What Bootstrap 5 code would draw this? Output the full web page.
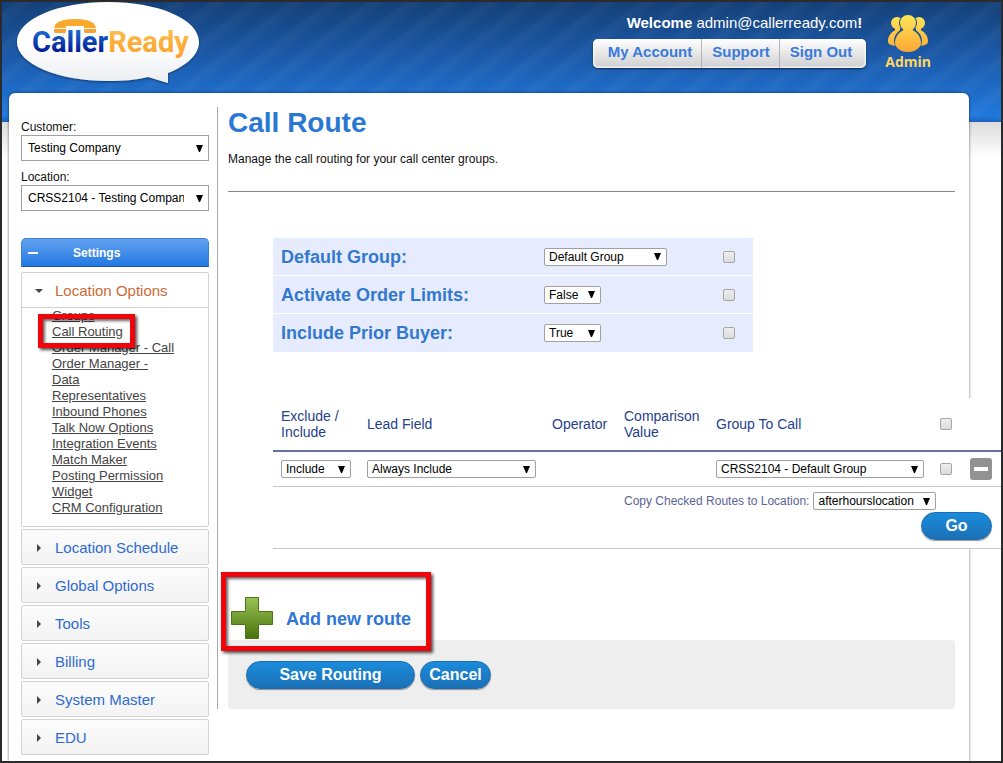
<!DOCTYPE html>
<html lang="en">
<head>
<meta charset="utf-8">
<meta name="viewport" content="width=device-width, initial-scale=1">
<title>CallerReady - Call Route</title>
<link rel="stylesheet" href="https://cdn.jsdelivr.net/npm/bootstrap@5.3.0/dist/css/bootstrap.min.css">
<style>
  body {
    font: 12px/16px "Liberation Sans", Arial, sans-serif;
    color: #111;
    min-height: 100vh;
    border: 2px solid #2b2b2d;
    background:
      repeating-linear-gradient(142deg, rgba(255,255,255,0) 0 9px, rgba(255,255,255,.03) 13px 18px, rgba(255,255,255,0) 24px) 0 0 / 100% 122px no-repeat,
      linear-gradient(#143f76, #1b59a8 45%, #2078dd 95%, #1a62b8) 0 0 / 100% 122px no-repeat,
      linear-gradient(#dcdcdc, #fff) 0 122px / 100% 36px no-repeat,
      #fff;
  }
  /* Header */
  .site-head { height: 91px; padding: 0 70px 0 14px; }
  .welcome { font-size: 15px; color: #fff; padding: 13px 4px 0 0; }
  .head-links {
    height: 29px; padding: 0 5px; margin-top: 8px; border-radius: 5px;
    background: linear-gradient(#fff, #e9e9ea 45%, #cfcfd1);
    box-shadow: 0 1px 2px rgba(0,0,0,.6), inset 0 0 2px 1px #fff;
  }
  .head-links a { font-size: 15px; font-weight: bold; line-height: 26px; padding: 0 9px 0 10px; color: #3a7adb; text-decoration: none; }
  .head-links a + a { border-left: 1px solid #b5b5b8; }
  .admin-link { color: #ffd562; font: bold 14px/16px "Open Sans", sans-serif; text-decoration: none; padding-top: 12px; margin-left: 19px; }

  /* Page sheet */
  .sheet {
    margin: 0 32px 0 7px; padding: 14px 14px 6px 12px; background: #fff;
    border-radius: 6px 6px 0 0; box-shadow: 0 0 3px rgba(0,0,0,.6);
    min-height: calc(100vh - 95px);
  }
  .side { width: 188px; margin-right: 8px; padding-top: 12px; }
  .main { min-width: 0; border-left: 1px solid #aaa; padding-left: 10px; }

  /* Form controls */
  .pick {
    appearance: none; height: 18px; padding: 0 16px 0 4px; color: #000; font-size: 12px; line-height: 16px;
    border: 1px solid #a0a0a0; border-radius: 2px;
    background: #fff url("data:image/svg+xml,%3Csvg xmlns='http://www.w3.org/2000/svg' width='7' height='7'%3E%3Cpath d='M0 0h7L4 7H3z'/%3E%3C/svg%3E") right 5px center no-repeat;
  }
  .pick-lg { height: 26px; border-radius: 0; padding: 0 24px 0 6px; width: 100%; }
  .tick {
    appearance: none; display: block; width: 12px; height: 12px; margin: 0;
    border: 1px solid #a6a6a6; border-radius: 2px; background: linear-gradient(#eee, #dcdcdc);
  }
  .tick:checked { background: #2a7bd8; }
  .w-default { width: 123px; } .w-bool { width: 57px; } .w-incl { width: 70px; }
  .w-field { width: 169px; } .w-group { width: 208px; }

  /* Side menu */
  .menu-title {
    height: 29px; margin: 27px 0 5px; border-radius: 5px 5px 0 0; color: #fff; font-weight: bold;
    border: 1px solid #3a80d8; border-bottom-color: #1b55a8; background: linear-gradient(#62a1ef, #2379e2); padding: 0 6px;
  }
  .menu-title::before { content: ""; width: 10px; height: 2px; background: #fff; margin-right: 35px; }
  .menu-item { border: 1px solid #d3d3d3; border-radius: 2px; margin-bottom: 2px; background: linear-gradient(#fcfcfc, #f3f3f3); }
  .menu-item.open { background: #fff; }
  .menu-head { width: 100%; height: 34px; border: 0; background: none; padding: 1px 0 0 12px; font-size: 15px; color: #2e6bd0; text-align: left; }
  .menu-head svg { width: 21px; height: 10px; display: block; }
  .open .menu-head { height: 35px; color: #cc6b35; border-bottom: 1px solid #d3d3d3; }
  .menu-list { padding: 0 32px 10px 30px; font-size: 13px; }
  .menu-list a { color: #444; text-decoration: underline; }

  /* Callout frames */
  .callout-host { position: relative; }
  .callout-frame {
    position: absolute; border: 5px solid #f0040c; pointer-events: none;
    box-shadow: 2px 2px 3px rgba(0,0,0,.7), inset 2px 2px 3px rgba(0,0,0,.6);
  }
  .frame-menu { inset: -10px auto auto -14px; width: 97px; height: 34px; }
  .frame-add { inset: -25px auto auto -7px; width: 210px; height: 79px; }

  /* Main content */
  h1 { font-size: 28px; line-height: 32px; font-weight: bold; color: #2a78d4; margin: 0 0 12px; }
  .rule { border: 0; border-top: 1px solid #888; opacity: 1; margin: 24px 0 46px; }
  table { border-collapse: separate; border-spacing: 0; table-layout: fixed; }
  th, td { padding: 0 8px; vertical-align: middle; }
  .options { width: 480px; margin: 0 0 46px 45px; }
  .options th, .options td { height: 38px; background: #e6ecfe; }
  .options th { font-size: 18px; color: #3278ce; }
  .options tr:not(:last-child) > * { border-bottom: 1px solid #fff; }
  .routes { width: calc(100% + 1px); margin: 0 -46px 48px 45px; background: #fff; position: relative; }
  .routes th { height: 54px; font-size: 14px; font-weight: normal; color: #263f8c; border-bottom: 2px solid #666da8; }
  .routes td { height: 35px; border-bottom: 1px solid #c6c6c6; }
  .routes .copy-cell { height: 62px; padding: 5px 9px 8px 8px; vertical-align: top; color: #5c6496; }
  .copy-stack { gap: 2px; }
  .remove-btn { display: block; border: 0; padding: 0; width: 22px; height: 22px; background: none; }
  .add-route { width: fit-content; height: 43px; padding: 0 0 0 3px; font-size: 18px; font-weight: bold; color: #2f76d8; text-decoration: none; gap: 13px; }
  .actions { height: 69px; background: #eee; border-radius: 4px; padding: 0 18px; gap: 5px; }
  .pill {
    height: 28px; min-width: 71px; border: 1px solid #1b6cae; border-radius: 14px; padding: 0 8px;
    font-size: 16px; line-height: 24px; font-weight: bold; color: #fff;
    background: linear-gradient(#1a8cdb, #1b70b6); box-shadow: 0 1px 1px rgba(0,0,0,.4);
  }
  .pill-wide { width: 169px; }
</style>
</head>
<body>
<header class="site-head d-flex align-items-start">
  <a href="#" aria-label="CallerReady home">
    <svg class="d-block" width="186" height="86" viewBox="0 0 186 86">
      <defs>
        <linearGradient id="lgBubble" x1="0" y1="0" x2="0" y2="1"><stop offset="0" stop-color="#fff"/><stop offset=".5" stop-color="#fff"/><stop offset="1" stop-color="#eceef2"/></linearGradient>
        <linearGradient id="lgBlue" gradientUnits="userSpaceOnUse" x1="0" y1="29" x2="0" y2="50"><stop offset="0" stop-color="#1769cf"/><stop offset="1" stop-color="#021c96"/></linearGradient>
        <linearGradient id="lgGold" gradientUnits="userSpaceOnUse" x1="0" y1="28" x2="0" y2="56"><stop offset="0" stop-color="#fdbd4d"/><stop offset="1" stop-color="#fb9f27"/></linearGradient>
        <filter id="soft" x="-5%" y="-5%" width="110%" height="115%"><feDropShadow dx="0" dy="1" stdDeviation="1.2" flood-color="#05204a" flood-opacity=".7"/></filter>
      </defs>
      <path filter="url(#soft)" fill="url(#lgBubble)" d="M92 0C142 0 183 17 183 40C183 53 170 64 152 71V81L132 75C120 78 107 79 92 79C42 79 1 62 1 40C1 17 42 0 92 0Z"/>
      <path fill="#fba82f" d="M38 26c1-6 8-9 21-9s20 3 21 9H68v-2H50v2z"/>
      <path fill="#f9a32e" d="M38 27h12v3l-1 1H39l-1-1zM68 27h12v3l-1 1H69l-1-1z"/>
      <text x="16" y="50" font-family="Roboto, sans-serif" font-size="29" font-weight="700"><tspan fill="url(#lgBlue)">Caller</tspan><tspan fill="url(#lgGold)">Ready</tspan></text>
    </svg>
  </a>
  <div class="ms-auto d-flex flex-column align-items-end">
    <div class="welcome"><b>Welcome</b> admin@callerready.com<b>!</b></div>
    <nav class="head-links d-flex">
      <a href="#">My Account</a><a href="#">Support</a><a href="#">Sign Out</a>
    </nav>
  </div>
  <a href="#" class="admin-link d-flex flex-column align-items-center">
    <svg width="42" height="40" viewBox="0 0 42 40">
      <defs>
        <linearGradient id="lgAdmin" gradientUnits="userSpaceOnUse" x1="0" y1="0" x2="0" y2="38"><stop offset="0" stop-color="#ffe85a"/><stop offset="1" stop-color="#fba733"/></linearGradient>
        <mask id="behind"><rect width="42" height="40" fill="#fff"/><circle cx="21" cy="9" r="9"/><ellipse cx="21" cy="27" rx="14" ry="13"/></mask>
      </defs>
      <g fill="url(#lgAdmin)">
        <g mask="url(#behind)">
          <circle cx="10" cy="9" r="6"/><circle cx="32" cy="9" r="6"/>
          <path d="M8 13h5v5H8zM29 13h5v5h-5z"/>
          <path d="M12 15C4 17 1 22 1 27c0 3 2 4 7 5l5-8zM30 15c8 2 11 7 11 12 0 3-2 4-7 5l-5-8z"/>
        </g>
        <circle cx="21" cy="9" r="8"/>
        <path d="M16 13h10c-1 2-1 3 1 4 4 2 7 7 7 12 0 4-5 9-13 9S8 33 8 29c0-5 3-10 7-12 2-1 2-2 1-4z"/>
      </g>
    </svg>
    Admin
  </a>
</header>

<div class="sheet d-flex align-items-start">
  <aside class="side flex-shrink-0">
    <label class="d-block" for="customer">Customer:</label>
    <select class="pick pick-lg d-block" id="customer"><option>Testing Company</option></select>
    <label class="d-block mt-2" for="location">Location:</label>
    <select class="pick pick-lg d-block" id="location"><option>CRSS2104 - Testing Company</option></select>

    <div class="menu-title d-flex align-items-center">Settings</div>

    <div class="menu-item open">
      <button type="button" class="menu-head d-flex align-items-center" data-bs-toggle="collapse" data-bs-target="#locOptions" aria-expanded="true"><svg><path fill="#444" d="M1 3h8L5 7z"/></svg>Location Options</button>
      <div class="collapse show" id="locOptions">
        <ul class="menu-list list-unstyled mb-0">
          <li><a href="#">Groups</a></li>
          <li class="callout-host"><a href="#">Call Routing</a><span class="callout-frame frame-menu"></span></li>
          <li><a href="#">Order Manager - Call</a></li>
          <li><a href="#">Order Manager - Data</a></li>
          <li><a href="#">Representatives</a></li>
          <li><a href="#">Inbound Phones</a></li>
          <li><a href="#">Talk Now Options</a></li>
          <li><a href="#">Integration Events</a></li>
          <li><a href="#">Match Maker</a></li>
          <li><a href="#">Posting Permission Widget</a></li>
          <li><a href="#">CRM Configuration</a></li>
        </ul>
      </div>
    </div>
    <div class="menu-item"><button type="button" class="menu-head d-flex align-items-center"><svg><path fill="#444" d="M3 1v8l4-4z"/></svg>Location Schedule</button></div>
    <div class="menu-item"><button type="button" class="menu-head d-flex align-items-center"><svg><path fill="#444" d="M3 1v8l4-4z"/></svg>Global Options</button></div>
    <div class="menu-item"><button type="button" class="menu-head d-flex align-items-center"><svg><path fill="#444" d="M3 1v8l4-4z"/></svg>Tools</button></div>
    <div class="menu-item"><button type="button" class="menu-head d-flex align-items-center"><svg><path fill="#444" d="M3 1v8l4-4z"/></svg>Billing</button></div>
    <div class="menu-item"><button type="button" class="menu-head d-flex align-items-center"><svg><path fill="#444" d="M3 1v8l4-4z"/></svg>System Master</button></div>
    <div class="menu-item mb-0"><button type="button" class="menu-head d-flex align-items-center"><svg><path fill="#444" d="M3 1v8l4-4z"/></svg>EDU</button></div>
  </aside>

  <main class="main flex-grow-1">
    <h1>Call Route</h1>
    <p class="mb-0">Manage the call routing for your call center groups.</p>
    <hr class="rule">

    <table class="options">
      <colgroup><col style="width:263px"><col style="width:179px"><col style="width:38px"></colgroup>
      <tbody>
        <tr>
          <th scope="row"><label for="defGroup">Default Group:</label></th>
          <td><select id="defGroup" class="pick w-default d-block"><option>Default Group</option></select></td>
          <td><input type="checkbox" class="tick" aria-label="Copy default group"></td>
        </tr>
        <tr>
          <th scope="row"><label for="limits">Activate Order Limits:</label></th>
          <td><select id="limits" class="pick w-bool d-block"><option>False</option><option>True</option></select></td>
          <td><input type="checkbox" class="tick" aria-label="Copy order limits"></td>
        </tr>
        <tr>
          <th scope="row"><label for="prior">Include Prior Buyer:</label></th>
          <td><select id="prior" class="pick w-bool d-block"><option>True</option><option>False</option></select></td>
          <td><input type="checkbox" class="tick" aria-label="Copy prior buyer"></td>
        </tr>
      </tbody>
    </table>

    <table class="routes">
      <colgroup><col style="width:86px"><col><col style="width:72px"><col style="width:92px"><col style="width:224px"><col style="width:30px"><col style="width:39px"></colgroup>
      <thead>
        <tr>
          <th scope="col">Exclude / Include</th>
          <th scope="col">Lead Field</th>
          <th scope="col">Operator</th>
          <th scope="col">Comparison Value</th>
          <th scope="col">Group To Call</th>
          <th scope="col"><input type="checkbox" class="tick" aria-label="Select all routes"></th>
          <th></th>
        </tr>
      </thead>
      <tbody>
        <tr>
          <td><select class="pick w-incl d-block" aria-label="Exclude or include"><option>Include</option><option>Exclude</option></select></td>
          <td><select class="pick w-field d-block" aria-label="Lead field"><option>Always Include</option></select></td>
          <td></td>
          <td></td>
          <td><select class="pick w-group d-block" aria-label="Group to call"><option>CRSS2104 - Default Group</option></select></td>
          <td><input type="checkbox" class="tick" aria-label="Select route"></td>
          <td><button type="button" class="remove-btn" aria-label="Remove route"><svg class="d-block" width="22" height="22"><rect width="22" height="22" rx="3" fill="#929292"/><rect x="4" y="9" width="14" height="4" fill="#fff"/></svg></button></td>
        </tr>
        <tr>
          <td colspan="3"></td>
          <td colspan="4" class="copy-cell">
            <div class="copy-stack d-flex flex-column">
              <div class="d-flex gap-1 align-items-center">
                <label for="copyTo">Copy Checked Routes to Location:</label>
                <select id="copyTo" class="pick w-default"><option>afterhourslocation</option></select>
              </div>
              <button type="button" class="pill align-self-end">Go</button>
            </div>
          </td>
        </tr>
      </tbody>
    </table>

    <div class="callout-host">
      <a href="#" class="add-route d-flex align-items-center">
        <svg width="42" height="43" viewBox="0 0 42 43">
          <defs><linearGradient id="lgPlus" gradientUnits="userSpaceOnUse" x1="0" y1="0" x2="0" y2="43"><stop offset="0" stop-color="#9bc455"/><stop offset="1" stop-color="#45700a"/></linearGradient></defs>
          <path d="M14.500.5h13v14h14v13h-14v14h-13v-14h-14v-13h14z" fill="url(#lgPlus)" stroke="#4c7315"/>
        </svg>
        Add new route
      </a>
      <span class="callout-frame frame-add"></span>
    </div>
    <div class="actions d-flex align-items-center">
      <button type="submit" class="pill pill-wide">Save Routing</button>
      <button type="button" class="pill">Cancel</button>
    </div>
  </main>
</div>
<script src="https://cdn.jsdelivr.net/npm/bootstrap@5.3.0/dist/js/bootstrap.bundle.min.js"></script>
</body>
</html>
